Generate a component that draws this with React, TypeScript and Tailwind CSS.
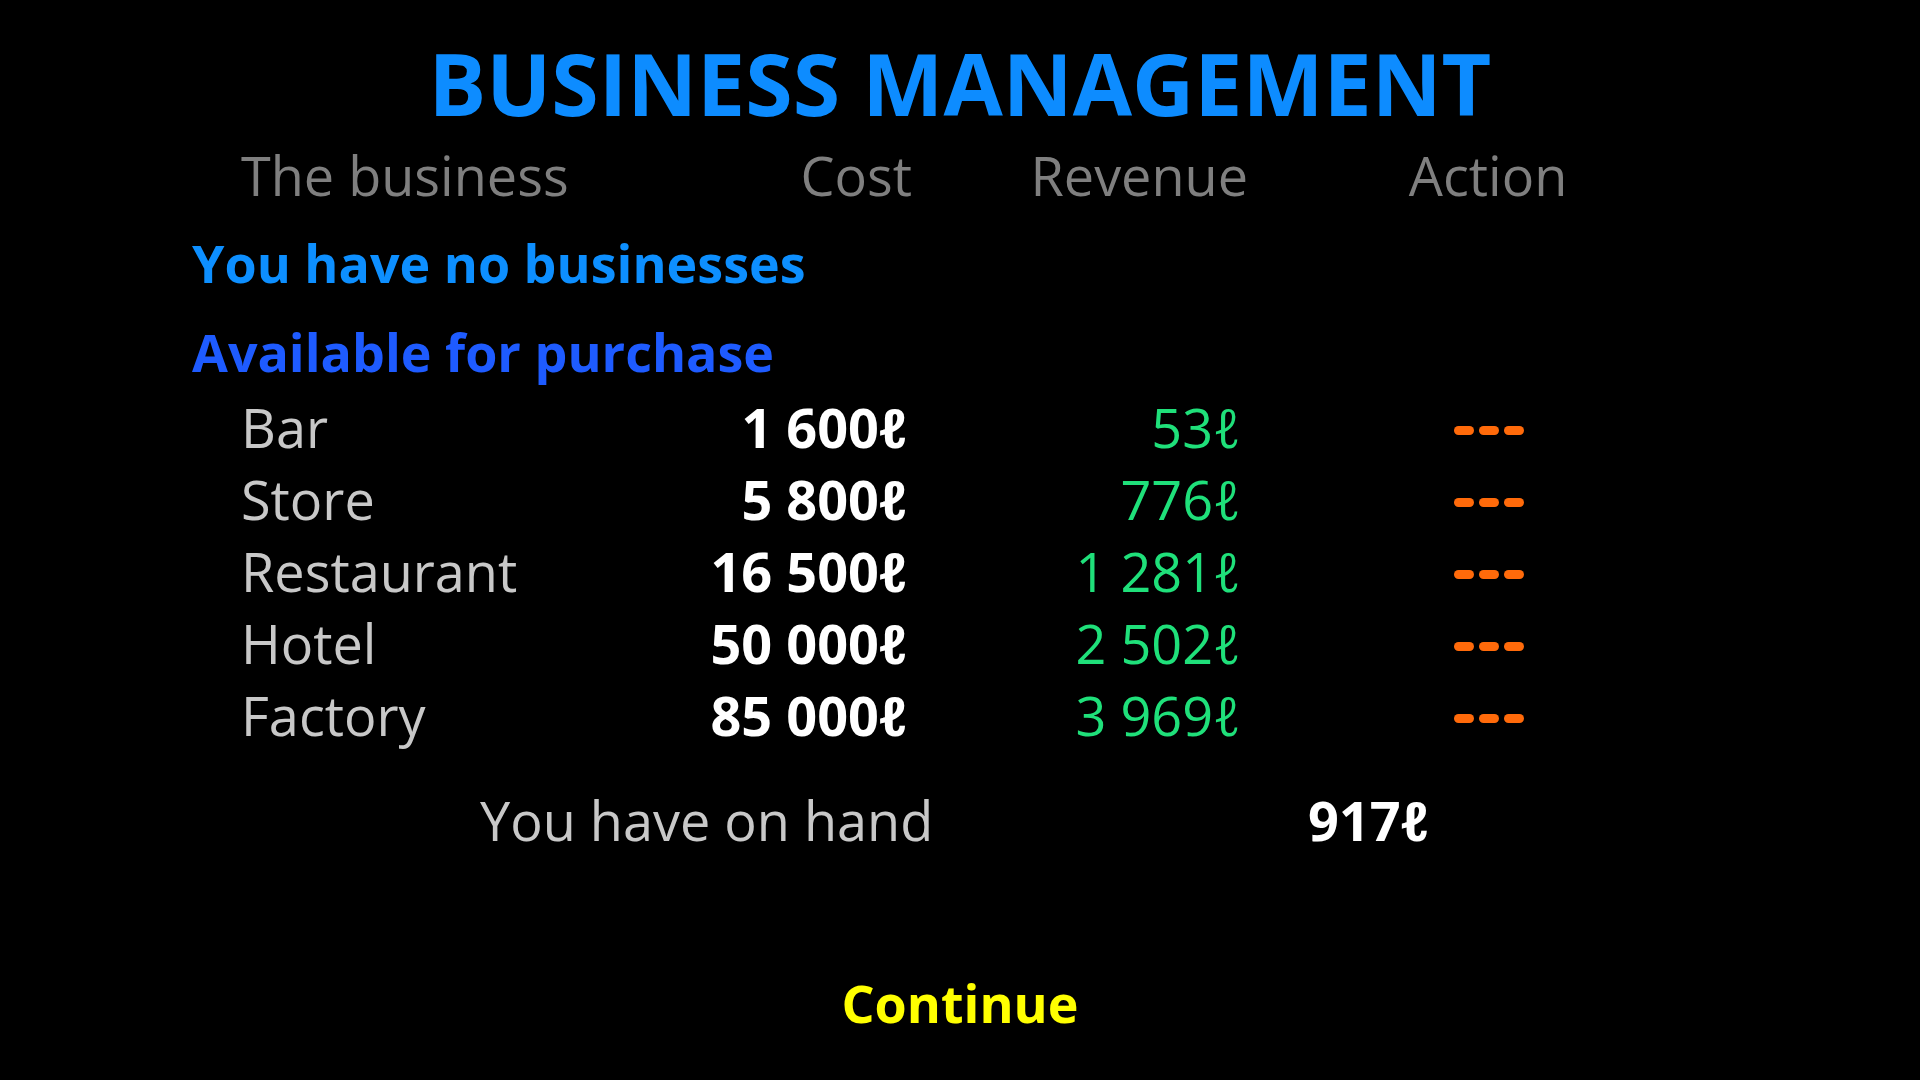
const negocios = [
  { nombre: "Bar", costo: "1 600", ingreso: "53" },
  { nombre: "Store", costo: "5 800", ingreso: "776" },
  { nombre: "Restaurant", costo: "16 500", ingreso: "1 281" },
  { nombre: "Hotel", costo: "50 000", ingreso: "2 502" },
  { nombre: "Factory", costo: "85 000", ingreso: "3 969" },
]

function Guiones() {
  return (
    <div className="flex justify-center items-center h-[72px] pt-[7px] gap-[5px]" aria-label="---">
      <span className="w-[20px] h-[9px] rounded-full bg-[#ff6a0a]" />
      <span className="w-[20px] h-[9px] rounded-full bg-[#ff6a0a]" />
      <span className="w-[20px] h-[9px] rounded-full bg-[#ff6a0a]" />
    </div>
  )
}

export default function App() {
  return (
    <div className="min-h-screen w-full bg-black text-white font-['Open_Sans',sans-serif] pt-[40px]">
      <h1 className="text-center text-[86px] leading-[85px] font-bold text-[#0d8cff]">
        BUSINESS MANAGEMENT
      </h1>

      <div className="pl-[192px] mt-[14px]">
        <div className="pl-[49px] grid grid-cols-[426px_245px_336px_480px] text-[54px] leading-[72px] text-[#7f7f7f]">
          <span>The business</span>
          <span className="text-right">Cost</span>
          <span className="text-right">Revenue</span>
          <span className="text-center">Action</span>
        </div>

        <p className="mt-[16px] text-[52px] leading-[72px] font-bold text-[#0d8fff]">
          You have no businesses
        </p>
        <p className="mt-[17px] text-[52px] leading-[72px] font-bold text-[#1e5bff]">
          Available for purchase
        </p>

        <div className="mt-[3px] pl-[49px]">
          {negocios.map((n) => (
            <div
              key={n.nombre}
              className="grid grid-cols-[420px_246px_334px_496px] text-[54px] leading-[72px]"
            >
              <span className="text-[#c8c8c8]">{n.nombre}</span>
              <span className="text-right font-bold text-white">{n.costo}ℓ</span>
              <span className="text-right text-[#1fe07a]">{n.ingreso}ℓ</span>
              <Guiones />
            </div>
          ))}
        </div>

        <div className="mt-[33px] ml-[288px] flex text-[54px] leading-[72px]">
          <span className="w-[828px] text-[#c8c8c8]">You have on hand</span>
          <span className="font-bold text-white">917ℓ</span>
        </div>
      </div>

      <div className="mt-[111px] text-center">
        <button className="text-[52px] leading-[72px] font-bold text-[#ffff00]">Continue</button>
      </div>
    </div>
  )
}
